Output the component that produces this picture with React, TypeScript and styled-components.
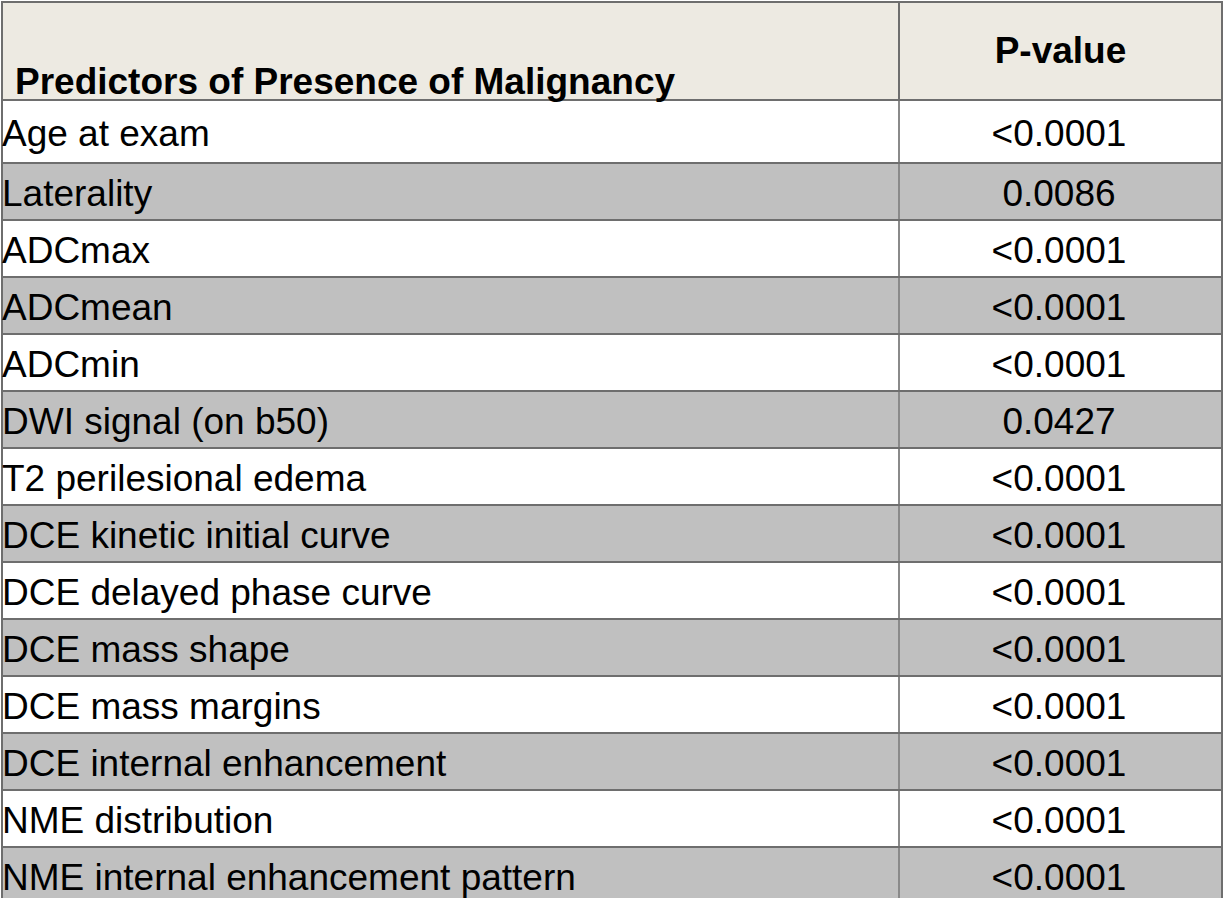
import React from "react";
import styled, { createGlobalStyle } from "styled-components";

const GlobalStyle = createGlobalStyle`
  html, body {
    margin: 0;
    padding: 0;
    background: #ffffff;
  }
  body {
    font-family: "Liberation Sans", Arial, sans-serif;
    color: #000;
  }
`;

const Page = styled.div`
  padding: 1px 0 0 1px;
  width: 1222px;
`;

const Table = styled.table`
  border-collapse: collapse;
  width: 1222px;
  table-layout: fixed;
  border: 2px solid #6e6e6e;
`;

const HeadRow = styled.tr`
  background: #edeae2;
  height: 98px;
`;

const HeadCell = styled.th<{ align: "left" | "center"; valign: "bottom" | "middle" }>`
  font-size: 37px;
  font-weight: bold;
  text-align: ${props => props.align};
  vertical-align: ${props => props.valign};
  padding: ${props => (props.valign === "bottom" ? "0 0 0 12px" : "0 0 2px 0")};
  border: 2px solid #6e6e6e;
  line-height: ${props => (props.valign === "bottom" ? "0.92" : "1")};
`;

const Row = styled.tr<{ shaded: boolean; first: boolean }>`
  background: ${props => (props.shaded ? "#c0c0c0" : "#ffffff")};
  height: ${props => (props.first ? "63px" : "57px")};
`;

const NameCell = styled.td`
  font-size: 37px;
  padding: 4px 0 0 0;
  text-indent: -1px;
  border-top: 2px solid #6e6e6e;
  border-bottom: 2px solid #6e6e6e;
  border-right: 2px solid #8a8a8a;
  line-height: 1;
  white-space: nowrap;
`;

const ValueCell = styled.td`
  font-size: 37px;
  text-align: center;
  padding: 4px 3px 0 0;
  border-top: 2px solid #6e6e6e;
  border-bottom: 2px solid #6e6e6e;
  line-height: 1;
`;

const rows: [string, string][] = [
  ["Age at exam", "<0.0001"],
  ["Laterality", "0.0086"],
  ["ADCmax", "<0.0001"],
  ["ADCmean", "<0.0001"],
  ["ADCmin", "<0.0001"],
  ["DWI signal (on b50)", "0.0427"],
  ["T2 perilesional edema", "<0.0001"],
  ["DCE kinetic initial curve", "<0.0001"],
  ["DCE delayed phase curve", "<0.0001"],
  ["DCE mass shape", "<0.0001"],
  ["DCE mass margins", "<0.0001"],
  ["DCE internal enhancement", "<0.0001"],
  ["NME distribution", "<0.0001"],
  ["NME internal enhancement pattern", "<0.0001"]
];

export default function App() {
  return (
    <>
      <GlobalStyle />
      <Page>
        <Table>
          <colgroup>
            <col style={{ width: 897 }} />
            <col />
          </colgroup>
          <thead>
            <HeadRow>
              <HeadCell align="left" valign="bottom">
                Predictors of Presence of Malignancy
              </HeadCell>
              <HeadCell align="center" valign="middle">
                P-value
              </HeadCell>
            </HeadRow>
          </thead>
          <tbody>
            {rows.map(([name, value], i) => (
              <Row key={name} shaded={i % 2 === 1} first={i === 0}>
                <NameCell>{name}</NameCell>
                <ValueCell>{value}</ValueCell>
              </Row>
            ))}
          </tbody>
        </Table>
      </Page>
    </>
  );
}
